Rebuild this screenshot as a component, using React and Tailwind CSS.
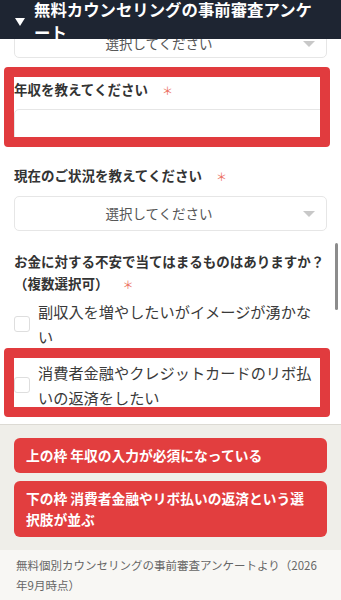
import React from "react";

const RED = "border-[#e13b3e]";

function Asterisk() {
  return (
    <span className="ml-[14px] text-[11px] leading-none font-normal text-[#ec6e60]">＊</span>
  );
}

function Label({ children }) {
  return (
    <div className="h-[26px] flex items-center text-[13.5px] font-bold text-[#333]">
      <span className="leading-none">{children}</span>
      <Asterisk />
    </div>
  );
}

function Select({ className = "" }) {
  return (
    <div
      className={`h-[35px] flex items-center border border-[#e6e6e6] rounded-[5px] bg-white ${className}`}
    >
      <span className="flex-1 text-center text-[13.5px] text-[#555] leading-none">
        選択してください
      </span>
      <svg width="12" height="6" viewBox="0 0 12 6" className="mr-[11px]">
        <path d="M0 0 L12 0 L6 6 Z" fill="#c8c8c8" />
      </svg>
    </div>
  );
}

function Option({ text, className = "" }) {
  return (
    <label className={`flex items-center gap-[8px] ${className}`}>
      <span className="w-[16px] h-[16px] shrink-0 border border-[#dedede] rounded-[3px] bg-white" />
      <span className="w-[282px] text-[15.2px] leading-[24.5px] text-[#3a3a3a]">
        {text}
      </span>
    </label>
  );
}

export default function App() {
  return (
    <div className="relative w-[341px] h-[600px] overflow-hidden bg-white flex flex-col font-['Noto_Sans_CJK_JP','Noto_Sans',sans-serif]">
      {/* ヘッダー（上に重なる） */}
      <header className="relative z-10 h-[39px] shrink-0 bg-[#1e2532] flex items-start overflow-hidden">
        <svg width="10" height="8" viewBox="0 0 10 8" className="ml-[15px] mt-[18px] shrink-0">
          <path d="M0 0 L10 0 L5 8 Z" fill="#fff" />
        </svg>
        <h1 className="ml-[9px] w-[291px] -mt-[2px] text-[16.4px] leading-[22.5px] font-bold text-white">
          無料カウンセリングの事前審査アンケート
        </h1>
      </header>

      {/* フォーム */}
      <div className="px-[14px] pb-[15px] shrink-0">
        <Select className="-mt-[16px] pt-[7px]" />

        <div className="mt-[19px]">
          <Label>年収を教えてください</Label>
        </div>
        <div className="mt-[6px] h-[36px] border border-[#e6e6e6] rounded-[5px]" />

        <div className="mt-[18px]">
          <Label>現在のご状況を教えてください</Label>
        </div>
        <Select className="mt-[7px]" />

        <div className="mt-[20px] text-[13.5px] font-bold text-[#333]">
          <p className="h-[22px] flex items-center">
            <span className="leading-none">お金に対する不安で当てはまるものはありますか？</span>
          </p>
          <p className="h-[22px] flex items-center">
            <span className="leading-none">（複数選択可）</span>
            <Asterisk />
          </p>
        </div>

        <Option className="mt-[4px]" text="副収入を増やしたいがイメージが湧かない" />
        <Option className="mt-[12px]" text="消費者金融やクレジットカードのリボ払いの返済をしたい" />
      </div>

      {/* 解説 */}
      <div className="shrink-0 border-t border-[#dcdad4] bg-[#efeee9] px-[14px] py-[13px] flex flex-col gap-[8px]">
        <div className="bg-[#e23e3f] rounded-[6px] px-[12px] py-[7px] text-white font-bold text-[13.75px] leading-[21px]">
          上の枠 年収の入力が必須になっている
        </div>
        <div className="bg-[#e23e3f] rounded-[6px] px-[12px] py-[7px] text-white font-bold text-[13.75px] leading-[21px]">
          下の枠 消費者金融やリボ払いの返済という選択肢が並ぶ
        </div>
      </div>

      <div className="flex-1 bg-[#f8f7f4] px-[16px] pt-[5px] text-[11.5px] leading-[20px] text-[#666]">
        無料個別カウンセリングの事前審査アンケートより（2026年9月時点）
      </div>

      {/* 赤枠（注釈） */}
      <div className={`absolute left-[4px] top-[67px] w-[326px] h-[80px] border-[10px] ${RED} rounded-[4px]`} />
      <div className={`absolute left-[4px] top-[348px] w-[326px] h-[69px] border-[10px] ${RED} rounded-[4px]`} />

      {/* スクロールバー */}
      <div className="absolute left-[335px] top-[243px] w-[3px] h-[67px] rounded-full bg-[#8c8c8c]" />
    </div>
  );
}
